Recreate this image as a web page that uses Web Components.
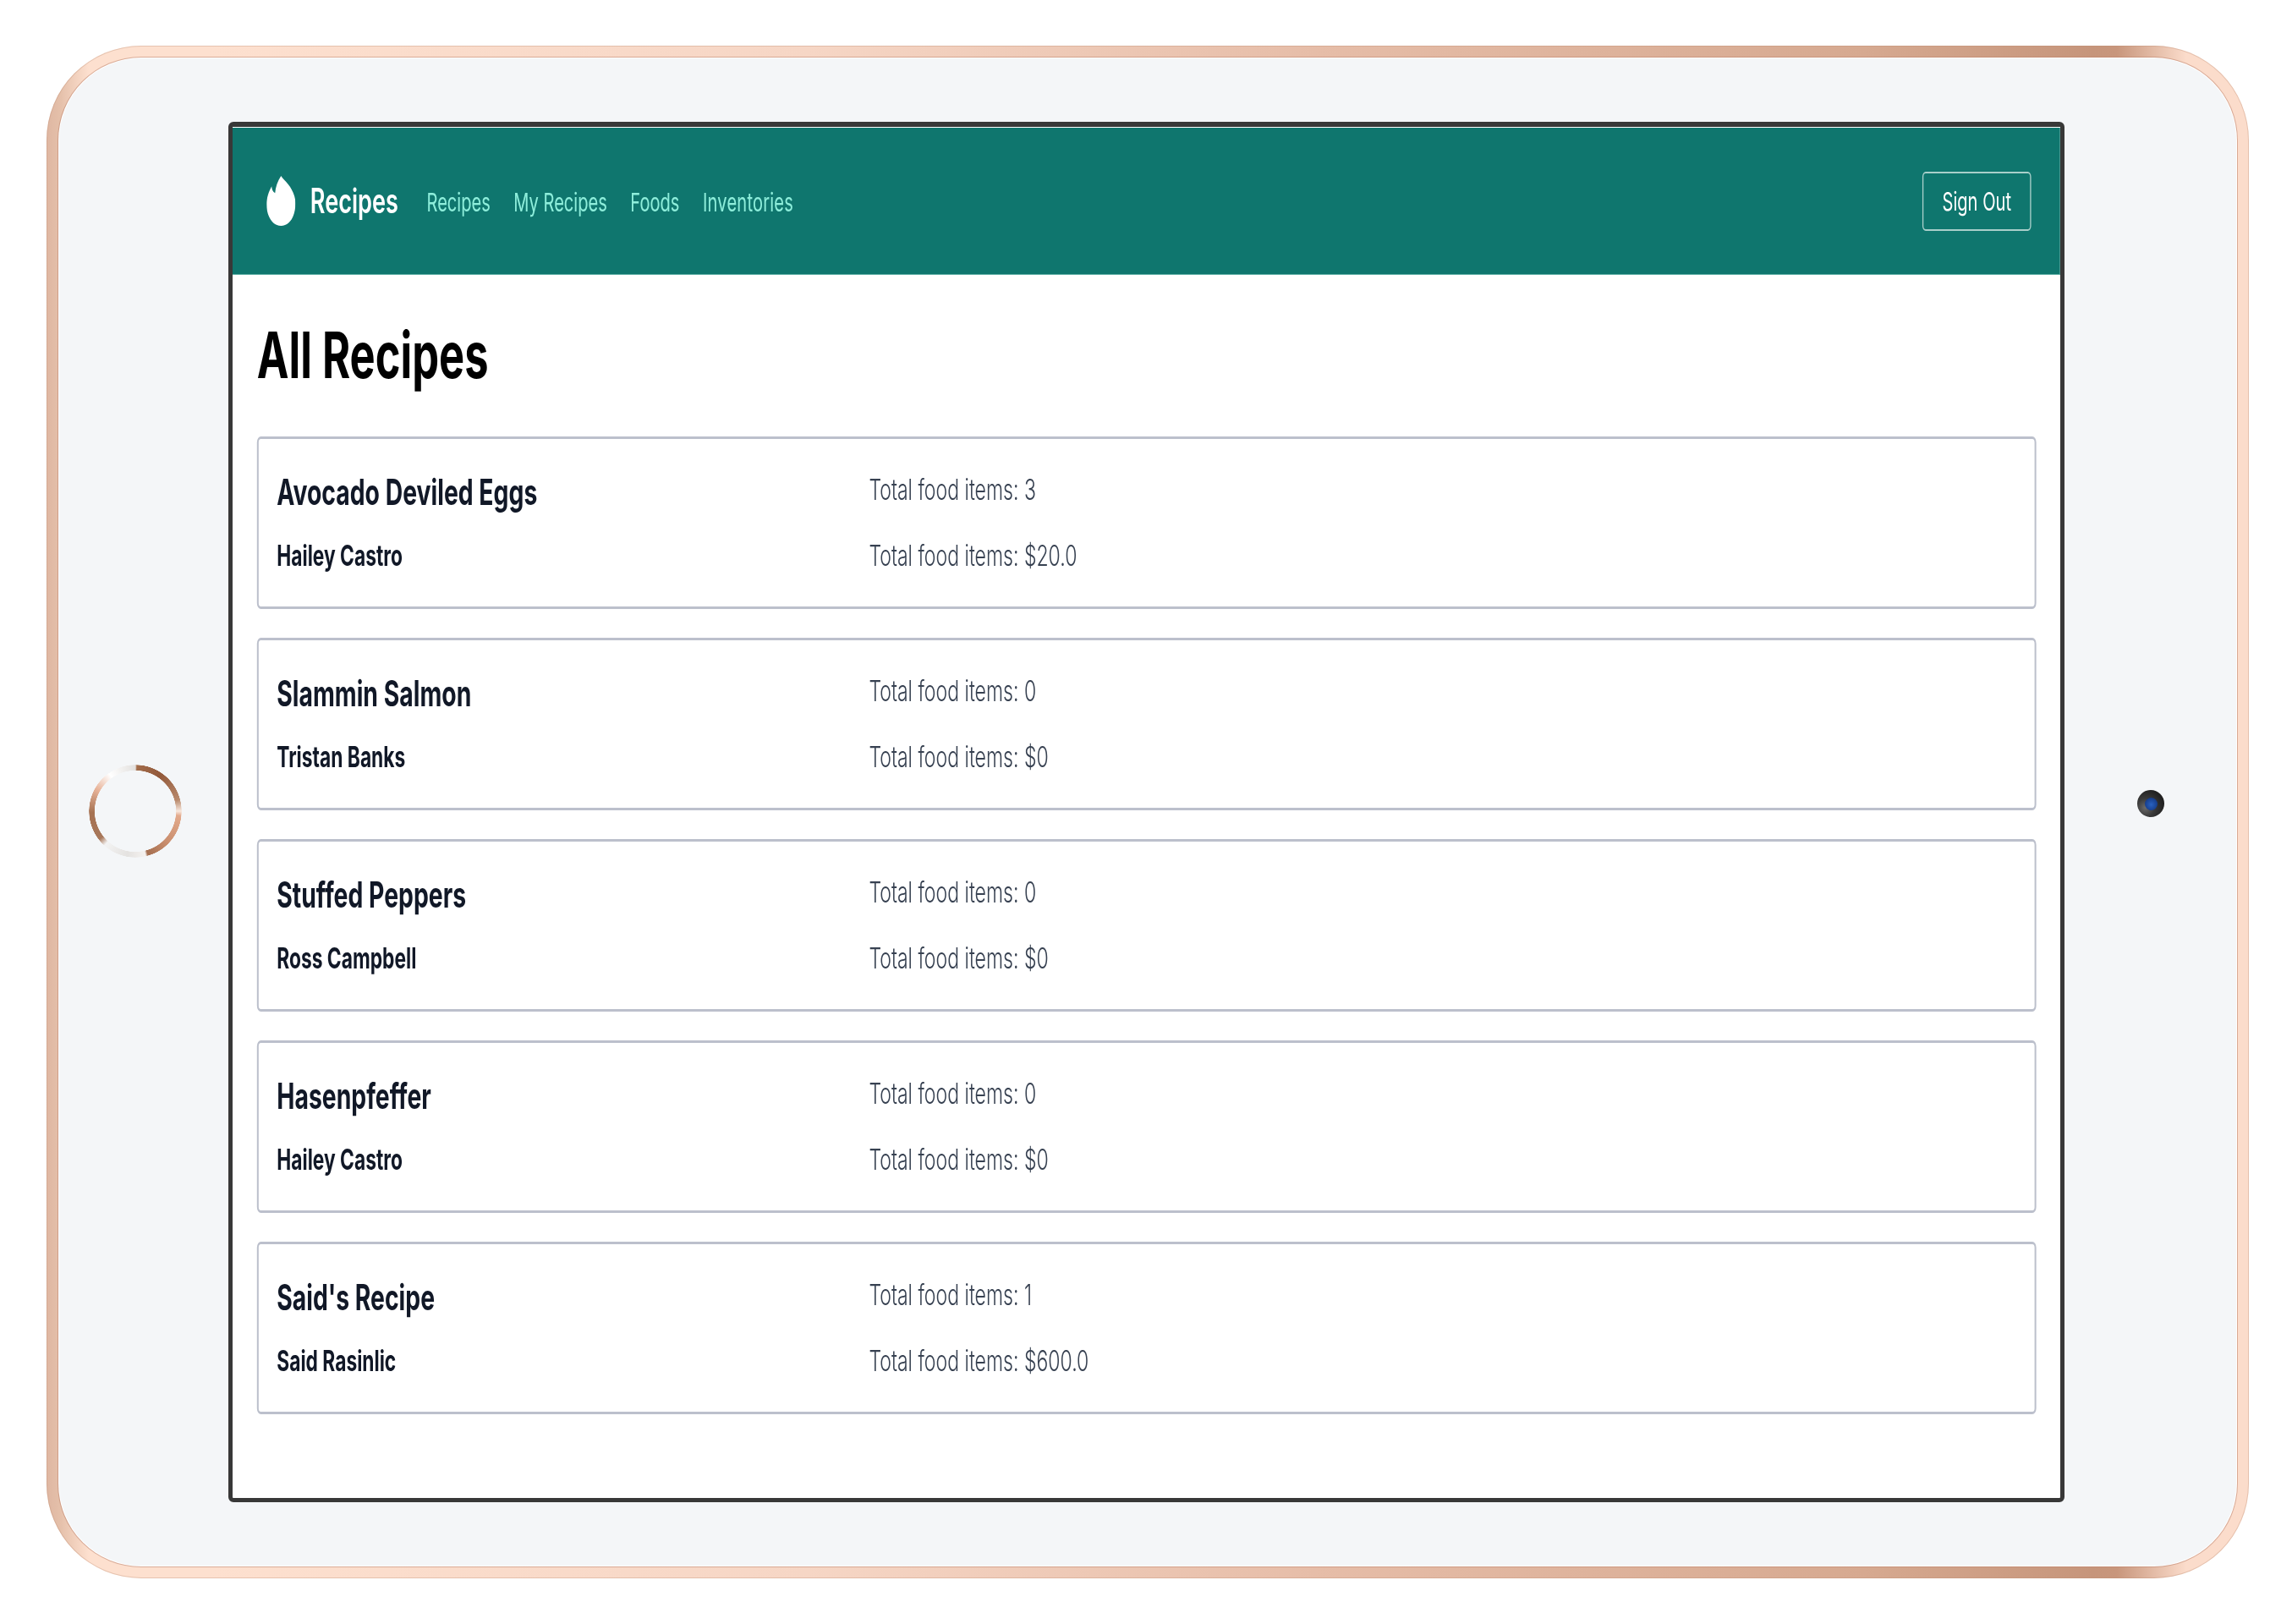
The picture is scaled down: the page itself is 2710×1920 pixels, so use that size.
<!DOCTYPE html>
<html><head><meta charset="utf-8"><title>All Recipes</title>
<style>
html,body{margin:0;background:#fff;}
body{padding:54px 0 0 55px;width:2655px;height:1866px;overflow:hidden;font-family:Inter,"Liberation Sans",sans-serif;}
</style></head><body>
<tablet-frame>
  <app-shell>
    <nav-bar></nav-bar>
    <recipe-list>
      <recipe-card name="Avocado Deviled Eggs" author="Hailey Castro" count="3" cost="$20.0"></recipe-card>
      <recipe-card name="Slammin Salmon" author="Tristan Banks" count="0" cost="$0"></recipe-card>
      <recipe-card name="Stuffed Peppers" author="Ross Campbell" count="0" cost="$0"></recipe-card>
      <recipe-card name="Hasenpfeffer" author="Hailey Castro" count="0" cost="$0"></recipe-card>
      <recipe-card name="Said's Recipe" author="Said Rasinlic" count="1" cost="$600.0"></recipe-card>
    </recipe-list>
  </app-shell>
</tablet-frame>
<script>
function def(name, html, init){
  customElements.define(name, class extends HTMLElement{
    constructor(){super();this.attachShadow({mode:'open'}).innerHTML=html;}
    connectedCallback(){ if(init) init(this); }
  });
}
def('tablet-frame',`<style>
:host{display:block;position:relative;width:2604px;height:1812px;box-sizing:border-box;padding:15px;border-radius:112px;
 background:linear-gradient(90deg,#dfb7a2 0,#e4bfa9 15px,#fde0cf 50px,#fde0cf 190px,#f6d6c5 900px,#e6bda8 1500px,#d6a990 2150px,#c6957b 2420px,#c8967c 2448px,#fbdccb 2530px,#fbdccb 2604px);
 box-shadow:inset 0 0 0 1px rgba(190,140,115,.35);}
.bezel{height:100%;box-sizing:border-box;background:#f4f6f8;border-radius:97px;padding:75px 0 0 200px;
 box-shadow:0 0 0 1px #fff,0 0 0 2px rgba(190,130,105,.55);}
.screen{width:2171px;height:1632px;box-sizing:border-box;background:#fff;border:solid #383838;border-width:6px 5px 5px 5px;border-radius:6px;overflow:hidden;padding-top:1px;}
.home{position:absolute;left:50px;top:850px;width:110px;height:110px;border-radius:50%;
 background:conic-gradient(#e9e6e3 0deg,#a26c4b 2deg,#92593a 35deg,#b98a6d 75deg,#f8e8de 90deg,#e3aa8c 96deg,#c98e6e 135deg,#a56f50 164deg,#f5f2f0 167deg,#e4e2e0 190deg,#f3f3f3 222deg,#a8785b 232deg,#a67252 268deg,#e8b49a 300deg,#fff 325deg,#e4e2e0 358deg);
 -webkit-mask:radial-gradient(circle closest-side,transparent 87%,#000 88%,#000 99%,transparent 100%);mask:radial-gradient(circle closest-side,transparent 87%,#000 88%,#000 99%,transparent 100%);}
.cam{position:absolute;left:2472px;top:880px;width:32px;height:32px;border-radius:50%;display:flex;align-items:center;justify-content:center;
 background:radial-gradient(circle at 30% 65%,#6b6b6b 0,#3a3a3a 35%,#1f1f1f 75%);}
.cam i{display:block;width:15px;height:15px;border-radius:50%;background:radial-gradient(circle at 50% 55%,#2a62c0 0,#173f8e 65%,#10224f 100%);}
</style><div class="bezel"><div class="screen"><slot></slot></div></div><div class="home"></div><div class="cam"><i></i></div>`);
def('app-shell',`<style>
:host{display:block;width:3225px;height:1620px;transform:scaleX(.67);transform-origin:0 0;font-family:Inter,"Liberation Sans",sans-serif;}
</style><slot></slot>`);
def('nav-bar',`<style>
:host{display:flex;align-items:center;height:174px;box-sizing:border-box;padding:0 51px 0 60px;background:#0f766e;border-bottom:1px solid #5fb0a6;}
svg{width:51px;height:59px;flex:none;display:block}
.brand{font-size:40.500px;font-weight:600;color:#fff;margin-left:26px;line-height:50px;}
nav{display:flex;gap:41px;margin-left:50px;flex:1;padding-top:2px}
a{font-size:30px;line-height:40px;color:#8eeedb;text-decoration:none;}
a:last-child{letter-spacing:.3px}
button{height:70px;width:192px;box-sizing:border-box;border:2px solid #a9cfca;border-radius:6px;background:transparent;color:#fff;font:400 30px Inter,"Liberation Sans",sans-serif;padding:0;}
</style>
<svg viewBox="0 0 34 58" preserveAspectRatio="none"><path fill="#fff" d="M17 0C20 4.500 26 9 29 15C32.500 21 34 26 34 32C34 47 27 58 17 58C7 58 0 47 0 33C0 26 2.500 18 6 12C6 15 7 18 10 20C10.500 13 13 6 17 0Z"/></svg>
<span class="brand">Recipes</span>
<nav><a>Recipes</a><a>My Recipes</a><a>Foods</a><a>Inventories</a></nav>
<button>Sign Out</button>`);
def('recipe-list',`<style>
:host{display:block;padding:55px 42px 0 43px;}
h1{margin:0 0 56px;font-size:75.500px;line-height:80px;font-weight:700;color:#000;}
.list{display:flex;flex-direction:column;gap:34px;}
</style><h1>All Recipes</h1><div class="list"><slot></slot></div>`);
def('recipe-card',`<style>
:host{display:flex;box-sizing:border-box;height:204px;padding:35px 32px 36px;border:3px solid #bcc0cc;border-radius:7px;background:#fff;}
.l{width:1045px;flex:none;}
.t{font-size:42.300px;line-height:56px;font-weight:700;color:#111827;}
.a{font-size:34px;line-height:46px;font-weight:700;color:#111827;margin-top:24px;}
.r{display:flex;flex-direction:column;gap:32px;padding-top:2px;}
.v{font-size:34.400px;line-height:46px;font-weight:300;color:#374151;}
</style><div class="l"><div class="t"></div><div class="a"></div></div><div class="r"><div class="v c"></div><div class="v d"></div></div>`,
el=>{const s=el.shadowRoot;s.querySelector('.t').textContent=el.getAttribute('name');s.querySelector('.a').textContent=el.getAttribute('author');
s.querySelector('.c').textContent='Total food items: '+el.getAttribute('count');s.querySelector('.d').textContent='Total food items: '+el.getAttribute('cost');});
</script>
</body></html>
